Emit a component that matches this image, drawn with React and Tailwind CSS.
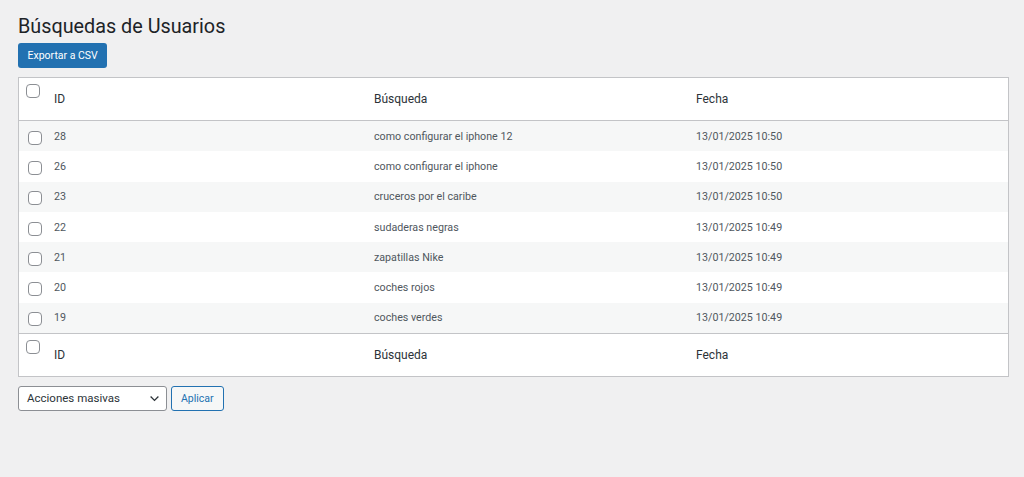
import React from "react";

const rows = [
  { id: 28, q: "como configurar el iphone 12", date: "13/01/2025 10:50" },
  { id: 26, q: "como configurar el iphone", date: "13/01/2025 10:50" },
  { id: 23, q: "cruceros por el caribe", date: "13/01/2025 10:50" },
  { id: 22, q: "sudaderas negras", date: "13/01/2025 10:49" },
  { id: 21, q: "zapatillas Nike", date: "13/01/2025 10:49" },
  { id: 20, q: "coches rojos", date: "13/01/2025 10:49" },
  { id: 19, q: "coches verdes", date: "13/01/2025 10:49" },
];

function Check({ className = "" }) {
  return (
    <span
      className={`block w-[14px] h-[14px] rounded-[4px] border border-[#8c8f94] bg-white ${className}`}
    />
  );
}

function HeadRow({ top }) {
  return (
    <div
      className={`flex h-[43px] text-[12px] text-[#2c3338] ${
        top ? "border-b" : "border-t"
      } border-[#c3c4c7]`}
    >
      <div className="w-[25px] pl-[7px] pt-[6px]">
        <Check />
      </div>
      <div className="w-[320px] pl-[10px] pt-[12px]">ID</div>
      <div className="w-[322px] pl-[10px] pt-[12px]">Búsqueda</div>
      <div className="flex-1 pl-[10px] pt-[12px]">Fecha</div>
    </div>
  );
}

export default function App() {
  return (
    <div
      className="min-h-[477px] bg-[#f0f0f1] px-[18px] pt-[12px]"
      style={{ fontFamily: "Roboto, 'Liberation Sans', sans-serif" }}
    >
      {/* title */}
      <h1 className="text-[19.8px] leading-[29px] text-[#1d2327]">
        Búsquedas de Usuarios
      </h1>
      <button className="mt-[2px] h-[25px] px-[9.5px] rounded-[3px] bg-[#2271b1] text-white text-[10.5px] leading-[25px]">
        Exportar a CSV
      </button>

      {/* table */}
      <div className="mt-[9px] w-[991px] border border-[#c3c4c7] bg-white">
        <HeadRow top />
        {rows.map((r, idx) => (
          <div
            key={r.id}
            className={`flex h-[30.3px] items-center text-[10.7px] text-[#50575e] ${
              idx % 2 === 0 ? "bg-[#f6f7f7]" : "bg-white"
            }`}
          >
            <div className="w-[25px] pl-[9px] pt-[3px]">
              <Check />
            </div>
            <div className="w-[320px] pl-[10px] pt-[1px]">{r.id}</div>
            <div className="w-[322px] pl-[10px] pt-[1px]">{r.q}</div>
            <div className="flex-1 pl-[10px] pt-[1px]">{r.date}</div>
          </div>
        ))}
        <HeadRow />
      </div>

      {/* bulk actions */}
      <div className="mt-[9px] flex gap-[4px]">
        <div className="relative w-[149px] h-[25px] rounded-[3px] border border-[#8c8f94] bg-white text-[11.5px] text-[#2c3338] leading-[23px] pl-[8px]">
          Acciones masivas
          <svg
            className="absolute right-[5px] top-[5px]"
            width="13"
            height="13"
            viewBox="0 0 20 20"
            fill="none"
            stroke="#2c3338"
            strokeWidth="2"
          >
            <path d="M4 7l6 6 6-6" />
          </svg>
        </div>
        <button className="h-[25px] px-[9px] rounded-[3px] border border-[#2271b1] bg-[#f6f7f7] text-[#2271b1] text-[10.5px] leading-[23px]">
          Aplicar
        </button>
      </div>
    </div>
  );
}
